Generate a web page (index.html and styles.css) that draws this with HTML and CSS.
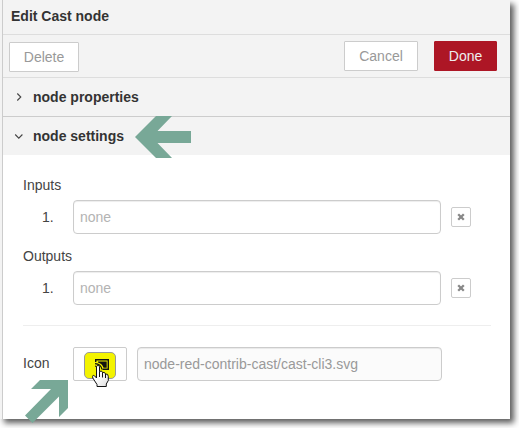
FILE: index.html
```html
<!DOCTYPE html>
<html lang="en">
<head>
<meta charset="utf-8">
<title>Edit Cast node</title>
<link rel="stylesheet" href="styles.css">
</head>
<body>
<main class="tray">
  <div class="content">
    <header class="title">Edit Cast node</header>
    <div class="toolbar">
      <button class="btn delete">Delete</button>
      <button class="btn cancel">Cancel</button>
      <button class="btn done">Done</button>
    </div>
    <div class="section-head">
      <svg class="chevron" width="10" height="10" viewBox="0 0 10 10"><path d="M3.300 1.500 6.800 5 3.300 8.500"/></svg>
      <span>node properties</span>
    </div>
    <div class="section-head open">
      <svg class="chevron" width="10" height="10" viewBox="0 0 10 10"><path d="M1.200 3.500 4.800 7.100 8.400 3.500"/></svg>
      <span>node settings</span>
    </div>
    <form class="settings">
      <div class="group-label">Inputs</div>
      <div class="port">
        <span class="num">1.</span>
        <input class="field" type="text" placeholder="none">
        <button type="button" class="clear"><svg width="8" height="8" viewBox="0 0 8 8"><path d="M1.2 1.2 6.8 6.8M6.8 1.2 1.2 6.8"/></svg></button>
      </div>
      <div class="group-label second">Outputs</div>
      <div class="port">
        <span class="num">1.</span>
        <input class="field" type="text" placeholder="none">
        <button type="button" class="clear"><svg width="8" height="8" viewBox="0 0 8 8"><path d="M1.2 1.2 6.8 6.8M6.8 1.2 1.2 6.8"/></svg></button>
      </div>
      <hr class="divider">
      <div class="icon-row">
        <span class="icon-label">Icon</span>
        <button type="button" class="icon-btn">
          <span class="swatch">
            <svg width="30" height="25" viewBox="0 0 30 25">
              <path d="M10.700 9V6.700H23.300V16.300H17.500" fill="none" stroke="#111" stroke-width="1.400"/>
              <path d="M13 8.500H21.700V14.700H18.500Q17 10.500 13 9.500Z" fill="#111"/>
              <path d="M10 10.700Q16 11 17 16.500M10 13Q13.500 13.500 14.500 16.500" fill="none" stroke="#111" stroke-width="1.200"/>
            </svg>
          </span>
        </button>
        <input class="field icon-path" type="text" value="node-red-contrib-cast/cast-cli3.svg" readonly>
      </div>
    </form>
  </div>
</main>
<svg class="overlay" width="519" height="428" viewBox="0 0 519 428">
  <defs>
    <linearGradient id="hand" x1="0" y1="0" x2="1" y2="1"><stop offset=".4" stop-color="#fff"/><stop offset="1" stop-color="#ddd"/></linearGradient>
  </defs>
  <g fill="#78a897">
    <path d="M135 137 156 116H172L157.500 131H191V143H157.500L172 158H156Z"/>
    <path d="M40 380H68V408L59 417V396.500L32.500 423 25 415.500 51 389H31Z"/>
  </g>
  <path d="M96.500 366.500Q98 364 99.500 366.500V371.500Q102 370 102.500 372.500 105 371.500 105.500 374 108.300 373.500 108.300 376.500V380.500L106.300 384V386.500H97V384.500L92.800 378Q92 374.500 94.500 375.800L96.500 378Z" fill="url(#hand)" stroke="#111" stroke-width="1"/>
  <path d="M99.500 371.500V377M102.500 372.500V377.500M105.500 374V378" stroke="#111" stroke-width="1"/>
</svg>
</body>
</html>
```
FILE: styles.css
```css
* { box-sizing: border-box; }
body {
  margin: 0;
  width: 519px;
  height: 428px;
  overflow: hidden;
  background: #fff;
  color: #444;
  font: 14px/20px "Liberation Sans", Arial, sans-serif;
}
.tray {
  width: 510px;
  height: 419px;
  padding-left: 2px;
  background: #f3f3f3;
  box-shadow: 4px 4px 6px rgba(0, 0, 0, .64);
}
.content {
  height: 419px;
  border-left: 1px solid #ccc;
  background: #fff;
}
.title {
  height: 35px;
  padding: 6px 0 0 8px;
  border-bottom: 1px solid #ddd;
  background: #f3f3f3;
  color: #333;
  font-weight: bold;
}
.toolbar {
  display: flex;
  height: 43px;
  padding: 6px 13px 0 6px;
  border-bottom: 1px solid #ddd;
  background: #f3f3f3;
}
.btn {
  height: 30px;
  padding: 0;
  border: 1px solid #ccc;
  border-radius: 1px;
  background: #fff;
  color: #999;
  font: inherit;
}
.delete { width: 70px; margin-top: 1px; }
.cancel { width: 74px; margin-left: auto; }
.done { width: 63px; margin-left: 16px; border-color: #ad1625; background: #ad1625; color: #eee; }
.section-head {
  display: flex;
  align-items: center;
  gap: 9px;
  height: 39px;
  padding-left: 11px;
  border-bottom: 1px solid #ccc;
  background: #f3f3f3;
  color: #333;
  font-weight: bold;
}
.section-head.open { height: 38px; border: 0; }
.chevron { fill: none; stroke: #444; stroke-width: 1.1; }
.settings { padding: 20px 0 0 20px; }
.group-label { height: 25px; }
.second { margin-top: 12px; }
.port { display: flex; align-items: center; height: 34px; }
.num { width: 50px; padding-left: 19px; }
.field {
  width: 368px;
  height: 34px;
  padding: 0 6px;
  border: 1px solid #ccc;
  border-radius: 4px;
  background: #fff;
  box-shadow: inset 0 1px 1px rgba(0, 0, 0, .075);
  color: #999;
  font: inherit;
}
.field::placeholder { color: #b3b3b3; }
.clear {
  display: flex;
  align-items: center;
  justify-content: center;
  width: 20px;
  height: 20px;
  margin-left: 10px;
  padding: 0;
  border: 1px solid #ccc;
  border-radius: 2px;
  background: #fff;
}
.clear path { fill: none; stroke: #888; stroke-width: 2.3; }
.divider { width: 468px; height: 1px; margin: 20px 0 21px; border: 0; background: #eee; }
.icon-row { display: flex; height: 34px; }
.icon-label { width: 50px; padding-top: 6px; }
.icon-btn {
  width: 54px;
  height: 34px;
  padding: 3px 0 0 10px;
  border: 1px solid #ccc;
  border-radius: 2px;
  background: #fff;
  text-align: left;
}
.swatch {
  display: block;
  width: 32px;
  height: 27px;
  border: 1px solid #999;
  border-radius: 5px;
  background: #f3f300;
}
.swatch svg { display: block; }
.icon-path { width: 305px; margin-left: 10px; background: #fbfbfb; }
.overlay { position: absolute; top: 0; left: 0; pointer-events: none; }
```
